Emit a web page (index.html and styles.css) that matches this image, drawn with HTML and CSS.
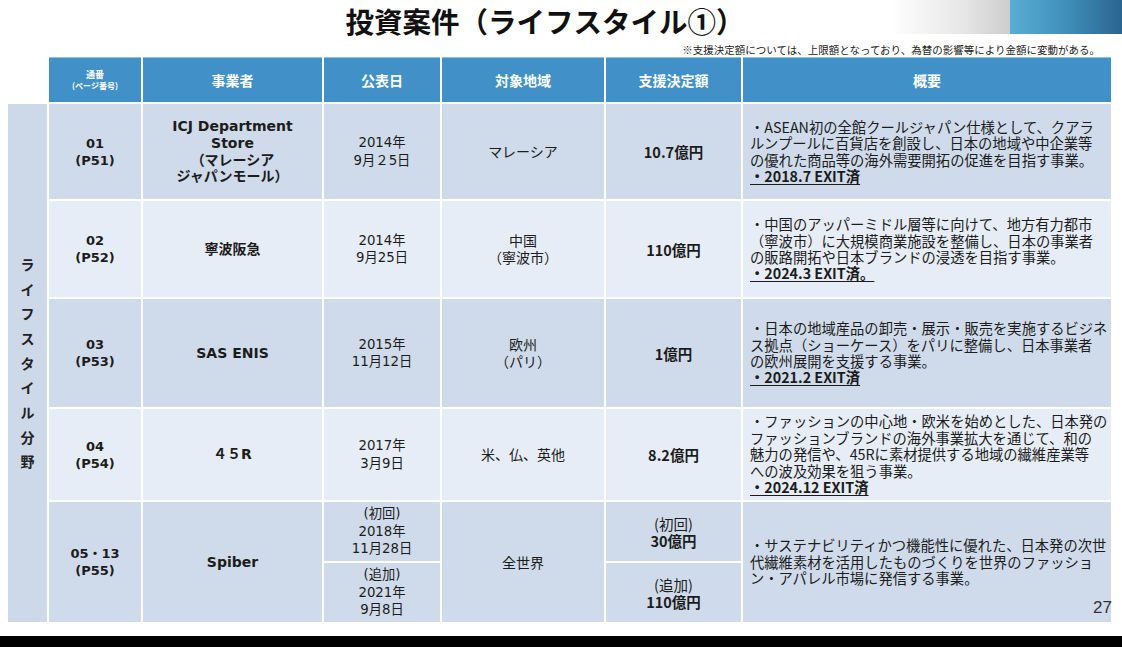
FILE: index.html
```html
<!DOCTYPE html>
<html lang="ja">
<head>
<meta charset="utf-8">
<title>投資案件（ライフスタイル①）</title>
<link rel="stylesheet" href="styles.css">
</head>
<body>
<div class="page">
  <div class="deco"><div class="deco-gray"></div><div class="deco-blue"></div></div>
  <h1 class="title">投資案件（ライフスタイル①）</h1>
  <p class="note">※支援決定額については、上限額となっており、為替の影響等により金額に変動がある。</p>

  <div class="table">
    <div class="blank"></div>
    <div class="cell head head-no"><span>通番<br><span class="head-sub">(ページ番号)</span></span></div>
    <div class="cell head">事業者</div>
    <div class="cell head">公表日</div>
    <div class="cell head">対象地域</div>
    <div class="cell head">支援決定額</div>
    <div class="cell head">概要</div>

    <div class="cell cat"><span class="cat-text">ライフスタイル分野</span></div>

    <!-- row 1 -->
    <div class="cell dark num">01<br>(P51)</div>
    <div class="cell dark name">ICJ Department<br>Store<br>（マレーシア<br>ジャパンモール）</div>
    <div class="cell dark date">2014年<br>9月２5日</div>
    <div class="cell dark region">マレーシア</div>
    <div class="cell dark amount">10.7億円</div>
    <div class="cell dark desc"><p>・ASEAN初の全館クールジャパン仕様として、クアラ<br>ルンプールに百貨店を創設し、日本の地域や中企業等<br>の優れた商品等の海外需要開拓の促進を目指す事業。<br><span class="exit">・2018.7 EXIT済</span></p></div>

    <!-- row 2 -->
    <div class="cell light num">02<br>(P52)</div>
    <div class="cell light name">寧波阪急</div>
    <div class="cell light date">2014年<br>9月25日</div>
    <div class="cell light region">中国<br>（寧波市）</div>
    <div class="cell light amount">110億円</div>
    <div class="cell light desc"><p>・中国のアッパーミドル層等に向けて、地方有力都市<br>（寧波市）に大規模商業施設を整備し、日本の事業者<br>の販路開拓や日本ブランドの浸透を目指す事業。<br><span class="exit">・2024.3 EXIT済。</span></p></div>

    <!-- row 3 -->
    <div class="cell dark num">03<br>(P53)</div>
    <div class="cell dark name">SAS ENIS</div>
    <div class="cell dark date">2015年<br>11月12日</div>
    <div class="cell dark region">欧州<br>（パリ）</div>
    <div class="cell dark amount">1億円</div>
    <div class="cell dark desc"><p>・日本の地域産品の卸売・展示・販売を実施するビジネ<br>ス拠点（ショーケース）をパリに整備し、日本事業者<br>の欧州展開を支援する事業。<br><span class="exit">・2021.2 EXIT済</span></p></div>

    <!-- row 4 -->
    <div class="cell light num">04<br>(P54)</div>
    <div class="cell light name">４５R</div>
    <div class="cell light date">2017年<br>3月9日</div>
    <div class="cell light region">米、仏、英他</div>
    <div class="cell light amount">8.2億円</div>
    <div class="cell light desc"><p>・ファッションの中心地・欧米を始めとした、日本発の<br>ファッションブランドの海外事業拡大を通じて、和の<br>魅力の発信や、45Rに素材提供する地域の繊維産業等<br>への波及効果を狙う事業。<br><span class="exit">・2024.12 EXIT済</span></p></div>

    <!-- row 5 -->
    <div class="cell dark num span2">05・13<br>(P55)</div>
    <div class="cell dark name span2">Spiber</div>
    <div class="cell dark date">(初回)<br>2018年<br>11月28日</div>
    <div class="cell dark region span2">全世界</div>
    <div class="cell dark amount"><span><span class="amount-label">(初回)</span><br>30億円</span></div>
    <div class="cell dark desc span2"><p>・サステナビリティかつ機能性に優れた、日本発の次世<br>代繊維素材を活用したものづくりを世界のファッショ<br>ン・アパレル市場に発信する事業。</p></div>
    <div class="cell dark date">(追加)<br>2021年<br>9月8日</div>
    <div class="cell dark amount"><span><span class="amount-label">(追加)</span><br>110億円</span></div>
  </div>

  <div class="page-no">27</div>
  <div class="bottom-bar"></div>
</div>
</body>
</html>
```

FILE: styles.css
```css
* { box-sizing: border-box; }
html, body { margin: 0; padding: 0; background: #fff; }
.page {
  position: relative;
  width: 1122px;
  height: 647px;
  overflow: hidden;
  background: #fff;
  font-family: "Noto Sans CJK JP", "Noto Sans", sans-serif;
  color: #1c1c1c;
}
.deco {
  position: absolute;
  top: 0;
  right: 0;
  display: flex;
  height: 34px;
}
.deco-gray {
  width: 115px;
  background: linear-gradient(90deg, #fdfdfd 0%, #e6e6e6 60%, #cdcdcd 100%);
}
.deco-blue {
  width: 112px;
  background: linear-gradient(90deg, #59aed3 0%, #3f8fbb 50%, #2a6590 100%);
}
.title {
  margin: 0;
  height: 36px;
  padding-right: 32px;
  text-align: center;
  font-size: 28.5px;
  font-weight: 700;
  line-height: 41.5px;
  color: #111;
}
.note {
  margin: 0;
  height: 21px;
  padding-top: 7px;
  padding-right: 22px;
  text-align: right;
  font-size: 10.5px;
  line-height: 14px;
  color: #222;
}
.table {
  display: grid;
  margin-left: 8px;
  width: 1103px;
  grid-template-columns: 39px 92px 179px 116px 162px 135px 368px;
  grid-template-rows: 45px 95px 96px 108px 91px 59px 59px;
  gap: 2px;
}
.cell {
  display: flex;
  align-items: center;
  justify-content: center;
  text-align: center;
}
.head {
  background: #4191c8;
  color: #fff;
  font-weight: 700;
  font-size: 14px;
  box-shadow: inset 0 1px 0 #8cc2e6;
}
.head-no {
  font-size: 9px;
  line-height: 11px;
}
.head-sub { font-size: 8px; }
.cat {
  grid-row: 2 / 8;
  background: #cdd9e9;
}
.cat-text {
  display: block;
  width: 14px;
  font-size: 14px;
  font-weight: 700;
  line-height: 24.7px;
  word-break: break-all;
  color: #222;
}
.dark { background: #cfdbea; }
.light { background: #e6edf6; }
.span2 { grid-row: span 2; }
.num {
  font-family: "DejaVu Sans", "Noto Sans CJK JP", sans-serif;
  font-weight: 700;
  font-size: 13px;
  line-height: 17px;
}
.name {
  font-family: "DejaVu Sans", "Noto Sans CJK JP", sans-serif;
  font-weight: 700;
  font-size: 14px;
  line-height: 16.7px;
}
.date {
  font-family: "DejaVu Sans", "Noto Sans CJK JP", sans-serif;
  font-size: 13.3px;
  line-height: 17.5px;
}
.region {
  font-size: 14px;
  line-height: 17px;
}
.amount {
  font-weight: 700;
  font-size: 14.5px;
  line-height: 17px;
}
.amount-label { font-weight: 400; }
.desc {
  justify-content: flex-start;
  text-align: left;
  padding-left: 7px;
  font-size: 14.3px;
  line-height: 16.4px;
  white-space: nowrap;
}
.desc p { margin: 0; }
.exit {
  font-weight: 700;
  text-decoration: underline;
  text-underline-offset: 2px;
}
.page-no {
  position: absolute;
  right: 10px;
  top: 598px;
  font-family: "Liberation Sans", Arial, sans-serif;
  font-size: 17px;
  line-height: 20px;
  color: #333;
}
.bottom-bar {
  margin-top: 14px;
  height: 11px;
  background: #000;
}
```
